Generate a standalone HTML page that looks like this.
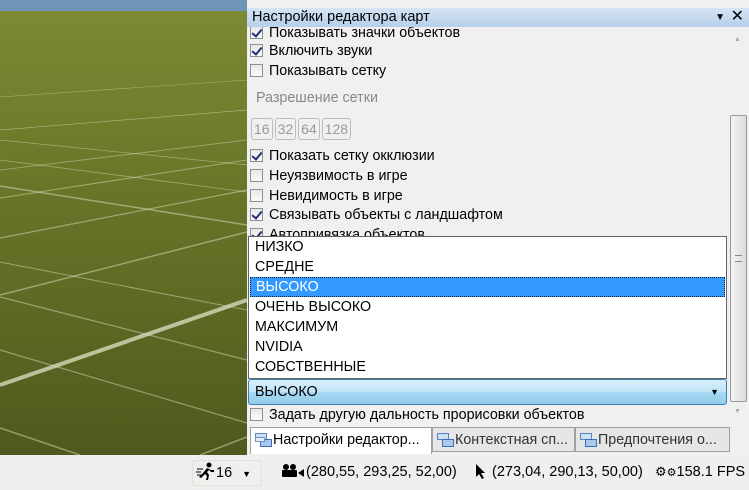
<!DOCTYPE html>
<html><head><meta charset="utf-8"><style>
*{margin:0;padding:0;box-sizing:border-box}
body{width:749px;height:490px;overflow:hidden;position:relative;font-family:"Segoe UI","Liberation Sans","DejaVu Sans",sans-serif;font-size:14.3px;color:#000;background:#f0efed}
.abs{position:absolute}
.panel{left:247px;top:0;width:502px;height:455px;background:#f0f0f0}
.title{left:247px;top:8px;width:502px;height:19px;background:linear-gradient(#d6e5f5,#b5cfeb);font-size:14.5px;line-height:19px;padding-left:5px}
.row{left:250px;height:19px;line-height:19px;white-space:nowrap}
.cb{display:inline-block;width:13px;height:13px;border:1px solid #8f8f8f;background:linear-gradient(#e8e8e8,#fafafa);vertical-align:-2px;margin-right:6px;position:relative}
.cb.c::after{content:"";position:absolute;left:3px;top:0px;width:4px;height:8px;border:solid #21307a;border-width:0 2px 2px 0;transform:rotate(40deg)}
.btn{display:inline-block;border:1px solid #bcbcbc;border-radius:3px;color:#999;height:22px;line-height:20px;padding:0 2px;margin-right:2px;font-size:14px}
.list{left:248px;top:236px;width:479px;height:143px;background:#fff;border:1px solid #646464}
.li{height:20px;line-height:20px;padding-left:6px}
.sel{background:#3399ff;color:#fff;outline:1px dotted #123;outline-offset:-1px;margin:0 1px}
.combo{left:248px;top:379px;width:479px;height:26px;border:1px solid #3c7fb1;border-radius:3px;background:linear-gradient(#d9effb 0%,#bfe4f8 50%,#a7d9f5 51%,#92cde9);line-height:24px;padding-left:6px}
.tab{top:427px;height:25px;line-height:24px;border:1px solid #a0a0a0;white-space:nowrap;overflow:hidden;padding-left:22px;position:absolute}
.ic{position:absolute;left:4px;top:5px;width:17px;height:14px}
.sb{font-size:14.5px;top:462px;height:20px;line-height:20px;white-space:nowrap}
</style></head><body>
<svg class="abs" style="left:0;top:0" width="247" height="455">
<defs><linearGradient id="g" x1="0" y1="0" x2="0" y2="1"><stop offset="0" stop-color="#7c8a34"/><stop offset="0.4" stop-color="#687629"/><stop offset="1" stop-color="#4e5a1d"/></linearGradient></defs>
<rect width="247" height="12" fill="#6f94b8"/>
<rect y="11" width="247" height="444" fill="url(#g)"/>
<g stroke="#e8ead0" stroke-opacity="0.45" fill="none">
<path d="M0 385 L247 300" stroke-width="4" stroke-opacity="0.7"/>
<path d="M0 295 L247 232" stroke-width="1.5"/>
<path d="M0 238 L247 190" stroke-width="1.2"/>
<path d="M0 198 L247 160" stroke-width="1"/>
<path d="M0 170 L247 140" stroke-width="0.8"/>
<path d="M0 130 L247 110" stroke-width="0.7"/>
<path d="M0 97 L247 80" stroke-width="0.6"/>
<path d="M0 350 L247 423" stroke-width="1.2"/>
<path d="M0 297 L247 360" stroke-width="1.2"/>
<path d="M0 262 L247 310" stroke-width="1"/>
<path d="M0 186 L247 225" stroke-width="1.5"/>
<path d="M0 160 L247 192" stroke-width="0.8"/>
<path d="M0 140 L247 165" stroke-width="0.7"/>
<path d="M0 428 L80 455" stroke-width="1.5"/>
<path d="M200 455 L247 437" stroke-width="1.5"/>
</g></svg>
<div class="abs panel"></div>
<div class="abs title">Настройки редактора карт<span style="position:absolute;right:24px;top:0;font-size:10px">▼</span><span style="position:absolute;right:5px;top:-1px;font-size:16px;font-weight:bold">✕</span></div>
<div class="abs" style="left:247px;top:27px;width:482px;height:208px;overflow:hidden">
<div class="abs row" style="left:3px;top:-3px"><span class="cb c"></span>Показывать значки объектов</div>
</div>
<div class="abs row" style="top:42px"><span class="cb c"></span>Включить звуки</div>
<div class="abs row" style="top:62px"><span class="cb"></span>Показывать сетку</div>
<div class="abs row" style="top:89px;left:256px;color:#888">Разрешение сетки</div>
<div class="abs" style="left:251px;top:118px"><span class="btn">16</span><span class="btn">32</span><span class="btn">64</span><span class="btn">128</span></div>
<div class="abs row" style="top:147px"><span class="cb c"></span>Показать сетку окклюзии</div>
<div class="abs row" style="top:167px"><span class="cb"></span>Неуязвимость в игре</div>
<div class="abs row" style="top:187px"><span class="cb"></span>Невидимость в игре</div>
<div class="abs row" style="top:206px"><span class="cb c"></span>Связывать объекты с ландшафтом</div>
<div class="abs" style="left:247px;top:228px;width:480px;height:8px;overflow:hidden"><div class="abs row" style="left:3px;top:-2px"><span class="cb c"></span>Автопривязка объектов</div></div>
<div class="abs" style="left:730px;top:27px;width:17px;height:400px;background:#f0f0f0"></div>
<div class="abs" style="left:734px;top:36px;font-size:7px;color:#aaa">▲</div>
<div class="abs" style="left:734px;top:408px;font-size:7px;color:#aaa">▼</div>
<div class="abs" style="left:730px;top:115px;width:17px;height:287px;border:1px solid #999;border-radius:2px;background:linear-gradient(90deg,#f4f4f4,#dcdcdc)"></div>
<div class="abs" style="left:735px;top:255px;width:7px;height:7px;border-top:1px solid #888;border-bottom:1px solid #888"></div>
<div class="abs list">
<div class="li">НИЗКО</div><div class="li">СРЕДНЕ</div><div class="li sel">ВЫСОКО</div><div class="li">ОЧЕНЬ ВЫСОКО</div><div class="li">МАКСИМУМ</div><div class="li">NVIDIA</div><div class="li">СОБСТВЕННЫЕ</div>
</div>
<div class="abs combo">ВЫСОКО<span style="position:absolute;right:7px;top:0;font-size:9px">▼</span></div>
<div class="abs row" style="top:406px"><span class="cb"></span>Задать другую дальность прорисовки объектов</div>
<div class="tab" style="left:250px;width:182px;background:#fff;border-bottom:none;height:27px"><svg class="ic" viewBox="0 0 17 14"><rect x="0.5" y="0.5" width="11" height="6" fill="#cfe0f5" stroke="#5a86c0"/><rect x="5.5" y="6.5" width="11" height="7" fill="#a9c8ee" stroke="#3a6fb5"/><rect x="0.5" y="4.5" width="9" height="4" fill="#e6eef8" stroke="#6f93c6"/></svg>Настройки редактор...</div>
<div class="tab" style="left:432px;width:143px;background:#e6e6e6;color:#333"><svg class="ic" viewBox="0 0 17 14"><rect x="0.5" y="0.5" width="11" height="6" fill="#cfe0f5" stroke="#5a86c0"/><rect x="5.5" y="6.5" width="11" height="7" fill="#a9c8ee" stroke="#3a6fb5"/></svg>Контекстная сп...</div>
<div class="tab" style="left:575px;width:155px;background:#e6e6e6;color:#333"><svg class="ic" viewBox="0 0 17 14"><rect x="0.5" y="0.5" width="11" height="6" fill="#cfe0f5" stroke="#5a86c0"/><rect x="5.5" y="6.5" width="11" height="7" fill="#a9c8ee" stroke="#3a6fb5"/></svg>Предпочтения о...</div>
<div class="abs" style="left:0;top:455px;width:749px;height:35px;background:#f0efed"></div>
<div class="abs" style="left:192px;top:460px;width:70px;height:26px;border:1px solid #e4e2df;border-radius:2px"></div>
<div class="abs sb" style="left:196px"><svg width="20" height="18" style="vertical-align:-3px"><circle cx="13" cy="3" r="2.5"/><path d="M11 6 L7 11 L3 15 L5 16 L9 12 L11 14 L10 18 L12 18 L13 13 L11 10 L13 8 L15 10 L18 10 L18 8 L15 8 Z"/><path d="M1 7h6M0 10h5M1 13h4" stroke="#000" stroke-width="1"/></svg>16 <span style="font-size:9px;margin-left:6px">▼</span></div>
<div class="abs sb" style="left:281px"><svg width="25" height="14" style="vertical-align:-2px"><circle cx="5" cy="3" r="3"/><circle cx="12" cy="3" r="3"/><rect x="1" y="6" width="15" height="7" rx="1"/><path d="M17 9 L23 5 L23 13 Z"/></svg>(280,55, 293,25, 52,00)</div>
<div class="abs sb" style="left:474px"><svg width="14" height="16" style="vertical-align:-3px"><path d="M2 1 L2 14 L5 11 L8 16 L10 15 L7 10 L11 10 Z"/></svg> (273,04, 290,13, 50,00)</div>
<div class="abs sb" style="left:655px"><span style="font-size:13px">⚙</span><span style="font-size:11px">⚙</span>158.1 FPS</div>
</body></html>
